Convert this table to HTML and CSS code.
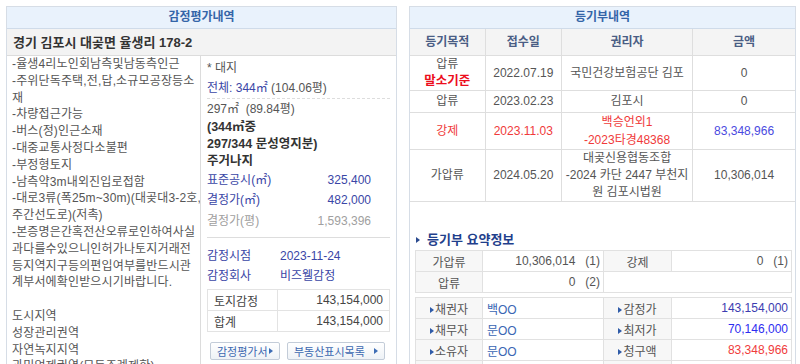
FILE: index.html
```html
<!DOCTYPE html>
<html lang="ko">
<head>
<meta charset="utf-8">
<title>감정평가내역 / 등기부내역</title>
<link rel="stylesheet" href="styles.css">
</head>
<body>
<div class="page">
  <section class="panel left">
    <div class="panel-head">감정평가내역</div>
    <div class="addr">경기 김포시 대곶면 율생리 178-2</div>
    <div class="appr-body">
      <div class="desc">-율생4리노인회남측및남동측인근<br>-주위단독주택,전,답,소규모공장등소<br>재<br>-차량접근가능<br>-버스(정)인근소재<br>-대중교통사정다소불편<br>-부정형토지<br>-남측약3m내외진입로접함<br>-대로3류(폭25m~30m)(대곶대3-2호,<br>주간선도로)(저촉)<br>-본증명은간혹전산오류로인하여사실<br>과다를수있으니인허가나토지거래전<br>등지역지구등의편입여부를반드시관<br>계부서에확인받으시기바랍니다.<br><br>도시지역<br>성장관리권역<br>자연녹지지역<br>과밀억제권역(모든조례제한)</div>
      <div class="detail">
        <div class="row20 first">* 대지</div>
        <div class="row20 dotted"><span class="blue">전체: 344㎡</span> (104.06평)</div>
        <div class="row20">297㎡ &nbsp;(89.84평)</div>
        <div class="bold-lines">(344㎡중<br>297/344 문성영지분)<br>주거나지</div>
        <div class="prices">
          <div class="price blue"><span>표준공시(㎡)</span><span>325,400</span></div>
          <div class="price blue"><span>결정가(㎡)</span><span>482,000</span></div>
          <div class="price light"><span>결정가(평)</span><span>1,593,396</span></div>
        </div>
        <div class="meta">
          <div class="meta-row"><span class="meta-k">감정시점</span><span>2023-11-24</span></div>
          <div class="meta-row"><span class="meta-k">감정회사</span><span>비즈웰감정</span></div>
        </div>
        <table class="sum-table">
          <tr><td class="k">토지감정</td><td class="v">143,154,000</td></tr>
          <tr><td class="k">합계</td><td class="v">143,154,000</td></tr>
        </table>
        <div class="btns">
          <span class="btn b1">감정평가서 <i class="tri"></i></span>
          <span class="btn b2">부동산표시목록 <i class="tri"></i></span>
        </div>
      </div>
    </div>
  </section>

  <section class="panel right">
    <div class="panel-head">등기부내역</div>
    <table class="reg">
      <colgroup><col class="c1"><col class="c2"><col class="c3"><col class="c4"></colgroup>
      <tr class="hd"><th>등기목적</th><th>접수일</th><th>권리자</th><th>금액</th></tr>
      <tr class="r1"><td>압류<br><b class="red-strong">말소기준</b></td><td>2022.07.19</td><td>국민건강보험공단 김포</td><td>0</td></tr>
      <tr class="r2"><td>압류</td><td>2023.02.23</td><td>김포시</td><td>0</td></tr>
      <tr class="r3 red"><td>강제</td><td>2023.11.03</td><td>백승언외1<br>-2023타경48368</td><td class="blue2">83,348,966</td></tr>
      <tr class="r4"><td>가압류</td><td>2024.05.20</td><td>대곶신용협동조합<br>-2024 카단 2447 부천지<br>원 김포시법원</td><td>10,306,014</td></tr>
    </table>

    <div class="sum-head"><i class="tri dark"></i>등기부 요약정보</div>
    <table class="sum1">
      <colgroup><col class="s1"><col class="s2"><col class="s3"><col class="s4"></colgroup>
      <tr><td class="k">가압류</td><td class="v">10,306,014 &nbsp;&nbsp;(1)</td><td class="k">강제</td><td class="v">0 &nbsp;&nbsp;(1)</td></tr>
      <tr><td class="k">압류</td><td class="v">0 &nbsp;&nbsp;(2)</td><td colspan="2"></td></tr>
    </table>
    <table class="sum2">
      <colgroup><col class="s1"><col class="s2"><col class="s3"><col class="s4"></colgroup>
      <tr><td class="k"><i class="tri"></i>채권자</td><td class="name">백OO</td><td class="k"><i class="tri"></i>감정가</td><td class="v c-blue">143,154,000</td></tr>
      <tr><td class="k"><i class="tri"></i>채무자</td><td class="name">문OO</td><td class="k"><i class="tri"></i>최저가</td><td class="v c-blue2">70,146,000</td></tr>
      <tr><td class="k"><i class="tri"></i>소유자</td><td class="name">문OO</td><td class="k"><i class="tri"></i>청구액</td><td class="v c-red">83,348,966</td></tr>
      <tr><td class="k"></td><td></td><td class="k"></td><td></td></tr>
    </table>
  </section>
</div>
</body>
</html>
```

FILE: styles.css
```css
html, body {
  margin: 0;
  padding: 0;
  background: #fff;
}
body {
  font-family: "Liberation Sans", "Noto Sans CJK KR", sans-serif;
  font-size: 12px;
  color: #555;
  height: 364px;
  overflow: hidden;
}
.page {
  display: flex;
  align-items: flex-start;
  gap: 12px;
  padding: 6px 0 0 6px;
}
.panel {
  border: 1px solid #d6dde6;
  border-bottom: none;
  box-sizing: border-box;
  height: 400px;
}
.left { width: 391px; }
.right { width: 387px; }

.panel-head {
  height: 21px;
  line-height: 21px;
  background: #e9f2fc;
  border-bottom: 1px solid #cfdbe9;
  text-align: center;
  color: #3465a8;
  font-weight: bold;
}
.addr {
  height: 26px;
  line-height: 27px;
  background: #f3f3f3;
  border-bottom: 1px solid #dcdcdc;
  padding-left: 6px;
  font-size: 13px;
  font-weight: bold;
  color: #333;
}
.appr-body {
  display: flex;
}
.desc {
  width: 188px;
  flex: none;
  border-right: 1px solid #dcdcdc;
  padding-left: 5px;
  font-size: 12px;
  letter-spacing: 0.15px;
  line-height: 16.8px;
  white-space: nowrap;
  overflow: hidden;
  height: 320px;
}
.detail {
  flex: 1;
  padding: 2px 6px 0 6px;
}
.row20 {
  height: 20px;
  line-height: 20px;
  white-space: nowrap;
}
.dotted {
  border-bottom: 1px dashed #dddddd;
}
.blue { color: #3a46a6; }
.bold-lines {
  line-height: 17px;
  font-weight: bold;
  color: #333;
  font-size: 12.5px;
}
.prices {
  padding-bottom: 5px;
  border-bottom: 1px solid #dddddd;
}
.price {
  display: flex;
  justify-content: space-between;
  height: 20px;
  line-height: 20px;
  padding-right: 19px;
}
.price.light { color: #a0a0a0; line-height: 22px; height: 22px; }
.meta {
  padding-top: 8px;
}
.meta-row {
  height: 20px;
  line-height: 20px;
  color: #3a46a6;
}
.meta-k {
  display: inline-block;
  width: 73px;
}
.sum-table {
  margin-top: 3px;
  width: 100%;
  border-collapse: collapse;
  border: 1px solid #dcdcdc;
}
.sum-table td {
  border: 1px solid #e3e3e3;
  height: 20px;
  padding: 0 6px;
  color: #444;
}
.sum-table .k { width: 57px; }
.sum-table .v { text-align: right; }
.btns {
  display: flex;
  gap: 7px;
  margin-top: 10px;
  padding-left: 3px;
}
.btn {
  display: inline-flex;
  align-items: center;
  justify-content: space-between;
  box-sizing: border-box;
  height: 18px;
  padding: 0 6px 0 6px;
  border: 1px solid #c3ccd8;
  border-radius: 2px;
  background: linear-gradient(#ffffff, #eef2f6);
  color: #3c68b0;
  font-size: 11px;
  white-space: nowrap;
}
.b1 { width: 70px; }
.b2 { width: 98px; }
.tri {
  display: inline-block;
  width: 0;
  height: 0;
  border-top: 3px solid transparent;
  border-bottom: 3px solid transparent;
  border-left: 4px solid #3e6db5;
}
.tri.dark { border-left-color: #2b4a8f; margin: 0 7px 0 6px; }

.reg {
  width: 100%;
  border-collapse: collapse;
  table-layout: fixed;
}
.c1 { width: 75px; }
.c2 { width: 76px; }
.c3 { width: 131px; }
.c4 { width: 102px; }
.reg th, .reg td {
  border: 1px solid #dedede;
  text-align: center;
  padding: 0;
  line-height: 17px;
}
.reg tr > :first-child { border-left: none; }
.reg tr > :last-child { border-right: none; }
.reg th {
  height: 26px;
  background: #f4f4f4;
  color: #4a5d84;
  font-weight: bold;
  border-top: none;
}
.reg .r1 td { height: 33px; }
.reg .r2 td { height: 21px; }
.reg .r3 td { height: 34px; line-height: 18px; }
.reg .r4 td { height: 49px; }
.red-strong { color: #ec0d1c; font-size: 12.5px; }
.reg .red td { color: #f03a3a; }
.reg .red td.blue2 { color: #4a4ae0; }

.sum-head {
  margin-top: 28px;
  height: 20px;
  line-height: 20px;
  font-weight: bold;
  font-size: 13px;
  color: #1f3f8c;
  display: flex;
  align-items: center;
}
.sum1, .sum2 {
  margin-left: 5px;
  width: 376px;
  border-collapse: collapse;
  table-layout: fixed;
  border: 1px solid #d8d8d8;
}
.sum1 { margin-top: 0; }
.sum2 { margin-top: 4px; }
.s1 { width: 67px; }
.s2 { width: 121px; }
.s3 { width: 68px; }
.s4 { width: 120px; }
.sum1 td, .sum2 td {
  border: 1px solid #e1e1e1;
  height: 20px;
  padding: 0 3px;
}
.sum1 .k, .sum2 .k {
  background: #f7f7f7;
  text-align: center;
  color: #555;
}
.sum1 .v, .sum2 .v {
  text-align: right;
}
.sum2 .k .tri { border-left-color: #2f5ba8; margin-right: 1px; vertical-align: 1px; }
.sum2 .name { color: #3a66b4; padding-left: 4px; }
.c-blue { color: #3c3cb0; }
.c-blue2 { color: #2d2df0; }
.c-red { color: #f03c3c; }
```
